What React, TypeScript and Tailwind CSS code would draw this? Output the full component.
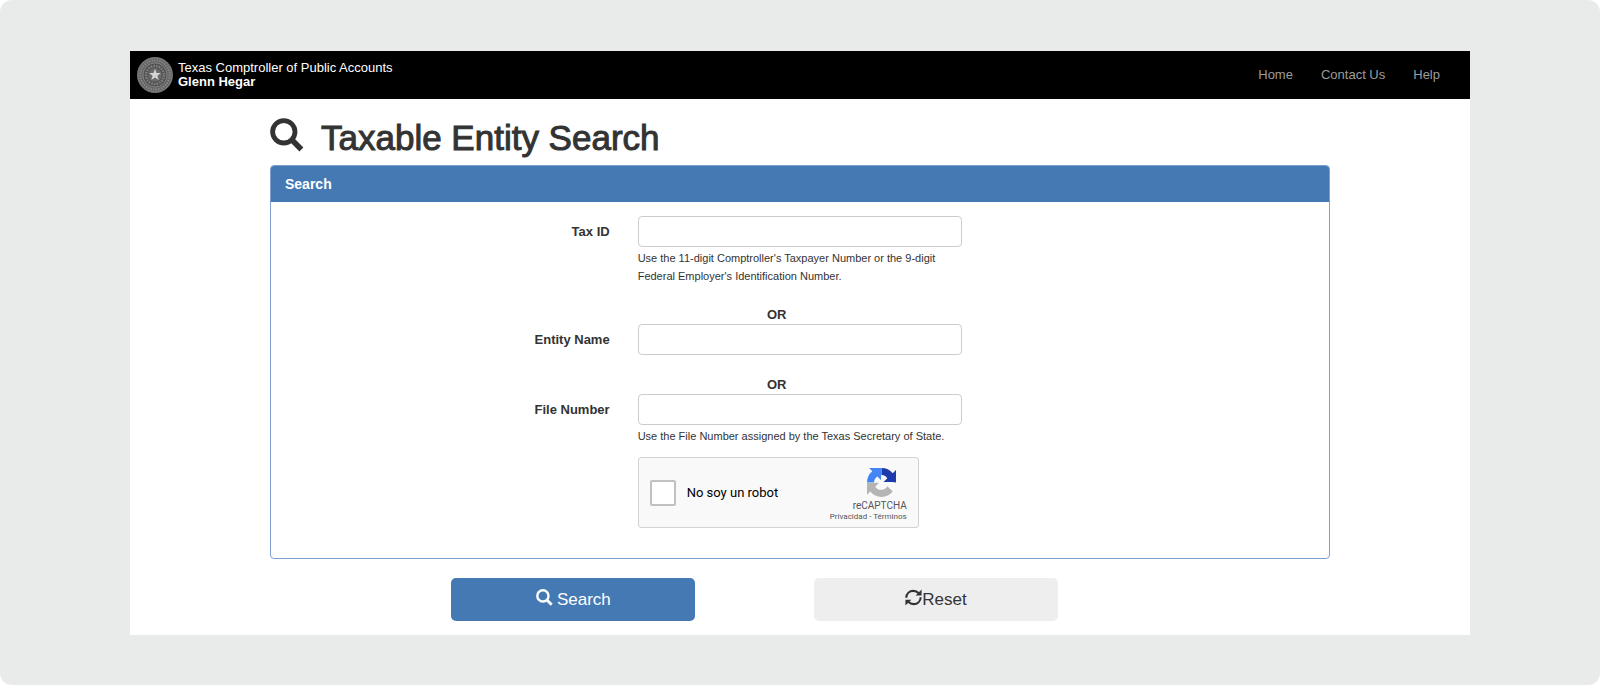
import type { ReactNode } from 'react';

function SearchIcon({ className }: { className?: string }) {
    return (
        <svg viewBox="0 0 34 34" fill="none" stroke="currentColor" className={className} aria-hidden="true">
            <circle cx="13.8" cy="13.8" r="11.2" strokeWidth="4.8" />
            <path d="M21.8 21.8L31.4 31.4" strokeWidth="5.6" />
        </svg>
    );
}

function RefreshIcon({ className }: { className?: string }) {
    return (
        <svg viewBox="0 0 16 16" fill="none" stroke="currentColor" strokeWidth="2" className={className} aria-hidden="true">
            <path d="M1.2 8.2C1.4 4.4 4.2 1.8 7.8 1.8c2.2 0 3.8 .8 5.2 2.2" />
            <path d="M14.8 7.8c-.2 3.8-3 6.4-6.6 6.4-2.2 0-3.8-.8-5.2-2.2" />
            <path d="M15.6 0.4v5.6H10zM0.4 15.6V10H6z" fill="currentColor" stroke="none" />
        </svg>
    );
}

function StateSeal() {
    return (
        <svg viewBox="0 0 36 36" className="size-9 shrink-0" aria-hidden="true">
            <circle cx="18" cy="18" r="18" fill="#666666" />
            <circle cx="18" cy="18" r="17" fill="none" stroke="#858585" strokeWidth="0.8" />
            <circle cx="18" cy="18" r="14.6" fill="none" stroke="#8c8c8c" strokeWidth="2" strokeDasharray="1.2 1.4" />
            <circle cx="18" cy="18" r="12" fill="#4f4f4f" stroke="#8c8c8c" strokeWidth="0.8" />
            <circle cx="18" cy="18" r="9" fill="none" stroke="#808080" strokeWidth="2.6" strokeDasharray="1.6 1.1" />
            <circle cx="18" cy="18" r="6.8" fill="#6a6a6a" />
            <path d="M18 11.8l1.5 4.2 4.4.1-3.5 2.6 1.3 4.3-3.7-2.5-3.7 2.5 1.3-4.3-3.5-2.6 4.4-.1z" fill="#d4d4d4" />
        </svg>
    );
}

function RecaptchaLogo() {
    return (
        <svg viewBox="0 0 64 64" className="size-[29px]" aria-hidden="true">
            <path d="M64 31.95c0-.46-.01-.92-.03-1.37V4.6l-7.18 7.18A31.96 31.96 0 0 0 31.86 0v15.5c.48 0 .86.06 1.14.17 4.98.39 9.3 3.14 11.84 7.13l-8.33 8.33c10.55-.04 22.47-.07 27.49.82" fill="#1c3aa9" />
            <path d="M31.86.01c-.46 0-.91.01-1.37.03H4.52l7.18 7.18A31.96 31.96 0 0 0 0 31.95h15.49c0-.48.06-.86.17-1.14.39-4.98 3.14-9.3 7.13-11.84l8.33 8.33c-.05-10.55-.07-22.47.74-27.29" fill="#4285f4" />
            <path d="M0 31.95c0 .46.01.92.03 1.37V59.3l7.18-7.18a31.96 31.96 0 0 0 49.59-.08L45.03 40.15a15.6 15.6 0 0 1-4.76 5.35c-2.06 1.6-4.97 2.92-9 2.92-.48 0-.86-.06-1.14-.17-4.98-.39-9.3-3.14-11.84-7.13l8.33-8.33c-10.55.04-22.47.07-26.62-.84" fill="#b5b5b5" />
        </svg>
    );
}

const navItems = ['Home', 'Contact Us', 'Help'];

function Field({ id, label, help, children }: { id: string; label: string; help?: string; children?: ReactNode }) {
    return (
        <div className="grid grid-cols-12">
            <label htmlFor={id} className="col-span-4 px-3.5 h-[31px] flex items-center justify-end text-[13px] font-bold">
                {label}
            </label>
            <div className="col-span-4 px-3.5">
                <input
                    id={id}
                    type="text"
                    className="block w-full h-[31px] px-3 text-[13px] bg-white border border-[#cccccc] rounded-[4px]"
                />
                {help && <p className="pt-0.5 text-[11px] leading-[18px]">{help}</p>}
                {children}
            </div>
        </div>
    );
}

function OrDivider() {
    return (
        <div className="grid grid-cols-12 pt-5">
            <div className="col-span-4 col-start-5 px-3.5">
                <p className="w-[278px] text-center text-[13px] leading-[19px] font-bold">OR</p>
            </div>
        </div>
    );
}

function Recaptcha() {
    return (
        <div className="mt-3 w-[281px] h-[71px] px-[11px] flex justify-between bg-[#f9f9f9] border border-[#d3d3d3] rounded-[3px] font-['Roboto',sans-serif] text-black">
            <div className="flex items-center gap-[11px]">
                <input id="robot" type="checkbox" className="appearance-none size-[26px] bg-white border-2 border-[#c1c1c1] rounded-[2px]" />
                <label htmlFor="robot" className="text-[13px]">No soy un robot</label>
            </div>
            <div className="flex flex-col items-end pt-2.5 text-[#555555]">
                <div className="pr-[11px]"><RecaptchaLogo /></div>
                <span className="pt-[3px] text-[10px] leading-3">reCAPTCHA</span>
                <span className="text-[8px] leading-[10px]">
                    <a href="#">Privacidad</a> - <a href="#">Términos</a>
                </span>
            </div>
        </div>
    );
}

export default function App() {
    return (
        <div className="min-h-screen bg-white font-['Liberation_Sans',Arial,sans-serif] text-[#333333]">
            <div className="min-h-screen bg-[#e8ebe9] rounded-xl px-4 pt-[51px] pb-[50px]">
                <div className="max-w-[1340px] mx-auto bg-white">
                    {/* Top bar */}
                    <header className="h-12 flex items-center justify-between bg-black pl-[7px] pr-[30px]">
                        <div className="flex items-center gap-[5px] text-white">
                            <StateSeal />
                            <div className="text-[13px] leading-[14px]">
                                <p>Texas Comptroller of Public Accounts</p>
                                <p className="font-bold">Glenn Hegar</p>
                            </div>
                        </div>
                        <nav className="flex gap-7">
                            {navItems.map((item) => (
                                <a key={item} href="#" className="text-[13px] text-[#9d9d9d]">{item}</a>
                            ))}
                        </nav>
                    </header>

                    <main className="max-w-[1060px] mx-auto pt-[19px] pb-3.5">
                        <h1 className="flex items-start gap-[17px] h-[47px] text-[35px] leading-[40px]">
                            <SearchIcon className="size-[34px]" />
                            <span className="[-webkit-text-stroke:1px_#333333]">Taxable Entity Search</span>
                        </h1>

                        {/* Search panel */}
                        <section className="border border-[#7d9fd0] rounded-[4px] overflow-hidden">
                            <h2 className="h-9 px-3.5 flex items-center bg-[#4579b4] text-white text-[14px] font-bold">Search</h2>
                            <div className="pt-3.5 pb-[30px]">
                                <Field
                                    id="taxId"
                                    label="Tax ID"
                                    help="Use the 11-digit Comptroller's Taxpayer Number or the 9-digit Federal Employer's Identification Number."
                                />
                                <OrDivider />
                                <Field id="entityName" label="Entity Name" />
                                <OrDivider />
                                <Field id="fileNumber" label="File Number" help="Use the File Number assigned by the Texas Secretary of State.">
                                    <Recaptcha />
                                </Field>
                            </div>
                        </section>

                        <div className="grid grid-cols-12 -mx-3.5 pt-[19px]">
                            <div className="col-start-3 col-span-3 px-3.5">
                                <button type="submit" className="w-full h-[43px] flex items-center justify-center gap-1 rounded-[5px] bg-[#4579b4] text-white text-[17px]">
                                    <SearchIcon className="size-[17px] mb-1" />
                                    Search
                                </button>
                            </div>
                            <div className="col-start-7 col-span-3 px-3.5">
                                <button type="reset" className="w-full h-[43px] flex items-center justify-center rounded-[5px] bg-[#eeeeee] text-[17px]">
                                    <RefreshIcon className="size-[17px] mb-1" />
                                    Reset
                                </button>
                            </div>
                        </div>
                    </main>
                </div>
            </div>
        </div>
    );
}
